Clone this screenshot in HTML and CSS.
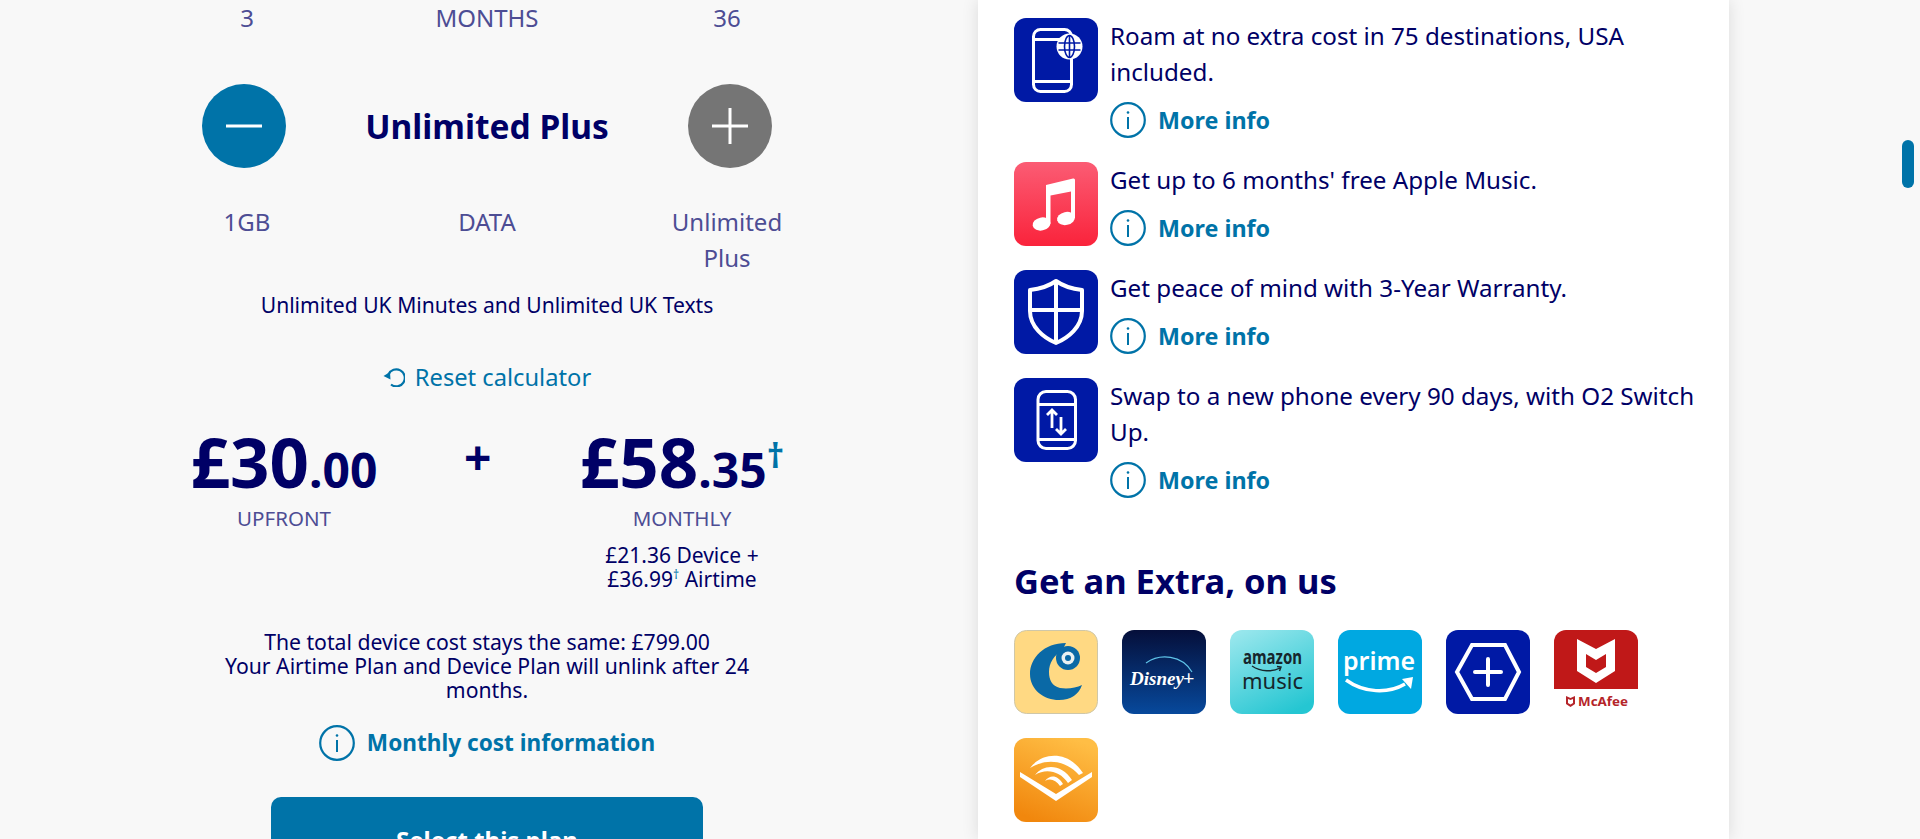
FILE: index.html
```html
<!DOCTYPE html>
<html lang="en">
<head>
    <meta charset="UTF-8">
    <meta name="viewport" content="width=device-width, initial-scale=1.0">
    <title>Unlimited Plus plan</title>
    <link rel="stylesheet" href="styles.css">
</head>
<body>
    <svg class="sprites" width="0" height="0">
        <symbol id="info" viewBox="0 0 36 36">
            <circle cx="18" cy="18" r="16.8" fill="none" stroke="currentColor" stroke-width="2.2"/>
            <path d="M18 15v12" fill="none" stroke="currentColor" stroke-width="2"/>
            <circle cx="18" cy="10.5" r="1.3" fill="currentColor"/>
        </symbol>
    </svg>

    <div class="page">
        <div class="calc">
            <div class="scale">
                <div>3</div>
                <div>MONTHS</div>
                <div>36</div>
            </div>

            <div class="stepper">
                <button class="step step-on" aria-label="Less data">
                    <svg width="36" height="4" viewBox="0 0 36 4"><path d="M0 2h36" stroke="#fff" stroke-width="3"/></svg>
                </button>
                <div class="plan-name">Unlimited Plus</div>
                <button class="step step-off" aria-label="More data">
                    <svg width="36" height="36" viewBox="0 0 36 36"><path d="M0 18h36M18 0v36" stroke="#fff" stroke-width="3"/></svg>
                </button>
            </div>

            <div class="scale scale-data">
                <div>1GB</div>
                <div>DATA</div>
                <div>Unlimited Plus</div>
            </div>

            <div class="allowance">Unlimited UK Minutes and Unlimited UK Texts</div>

            <a class="reset" href="#">
                <svg width="22" height="20" viewBox="0 0 22 20" fill="none" stroke="currentColor" stroke-width="2.2">
                    <path d="M5.500 7.500A8.500 8.500 0 1 1 8 17.500"/>
                    <path d="M0.500 9l6.500-4 0.500 7.500z" stroke="none" fill="currentColor"/>
                </svg>
                Reset calculator
            </a>

            <div class="prices">
                <div class="price price-up">
                    <div class="amount">£30<small>.00</small></div>
                    <div class="price-label">UPFRONT</div>
                </div>
                <div class="plus">+</div>
                <div class="price price-month">
                    <div class="amount">£58<small>.35</small><sup>†</sup></div>
                    <div class="price-label">MONTHLY</div>
                    <div class="split">£21.36 Device +<br>£36.99<sup>†</sup> Airtime</div>
                </div>
            </div>

            <p class="note">The total device cost stays the same: £799.00<br>Your Airtime Plan and Device Plan will unlink after 24 months.</p>

            <a class="more more-center" href="#">
                <svg class="info" width="36" height="36"><use href="#info"/></svg>
                Monthly cost information
            </a>

            <button class="select">Select this plan</button>
        </div>

        <div class="card">
            <div class="perk">
                <svg class="tile" width="84" height="84" viewBox="0 0 84 84">
                    <rect width="84" height="84" rx="12" fill="#0019a5"/>
                    <g fill="none" stroke="#fff" stroke-width="3">
                        <rect x="19.500" y="11.500" width="38" height="62" rx="7"/>
                        <path d="M19.500 21.500h30M19.500 63.500h38"/>
                    </g>
                    <circle cx="55.500" cy="28.500" r="13" fill="#fff"/>
                    <g fill="none" stroke="#0019a5" stroke-width="1.600">
                        <ellipse cx="55.500" cy="28.500" rx="5" ry="11"/>
                        <path d="M55.500 17v23M44.500 25h22M44.500 32h22"/>
                    </g>
                </svg>
                <div class="perk-body">
                    <p>Roam at no extra cost in 75 destinations, USA included.</p>
                    <a class="more" href="#"><svg class="info" width="36" height="36"><use href="#info"/></svg>More info</a>
                </div>
            </div>

            <div class="perk">
                <svg class="tile" width="84" height="84" viewBox="0 0 84 84">
                    <defs><linearGradient id="music" x1="0" y1="0" x2="0" y2="1"><stop offset="0" stop-color="#fb5c74"/><stop offset="1" stop-color="#fa233b"/></linearGradient></defs>
                    <rect width="84" height="84" rx="12" fill="url(#music)"/>
                    <g fill="#fff">
                        <path d="M32 23L59 16.500Q61 16 61 18V56H57V29.500L36.500 33.500V62H32z"/>
                        <ellipse cx="52" cy="56.500" rx="9" ry="6.500" transform="rotate(-12 52 56.500)"/>
                        <ellipse cx="27.500" cy="62" rx="9" ry="6.500" transform="rotate(-12 27.500 62)"/>
                    </g>
                </svg>
                <div class="perk-body">
                    <p>Get up to 6 months' free Apple Music.</p>
                    <a class="more" href="#"><svg class="info" width="36" height="36"><use href="#info"/></svg>More info</a>
                </div>
            </div>

            <div class="perk">
                <svg class="tile" width="84" height="84" viewBox="0 0 84 84">
                    <rect width="84" height="84" rx="12" fill="#0019a5"/>
                    <path fill="none" stroke="#fff" stroke-width="4" stroke-linejoin="round" d="M42 11c-7 5-17 8-26 9v21c0 16 14 27 26 32 12-5 26-16 26-32V20c-9-1-19-4-26-9zM42 11v62M16 40h52"/>
                </svg>
                <div class="perk-body">
                    <p>Get peace of mind with 3-Year Warranty.</p>
                    <a class="more" href="#"><svg class="info" width="36" height="36"><use href="#info"/></svg>More info</a>
                </div>
            </div>

            <div class="perk">
                <svg class="tile" width="84" height="84" viewBox="0 0 84 84">
                    <rect width="84" height="84" rx="12" fill="#0019a5"/>
                    <g fill="none" stroke="#fff" stroke-width="3">
                        <rect x="24" y="13.500" width="37.500" height="57" rx="8"/>
                        <path d="M24 26.500h37.500M24 61.500h37.500"/>
                        <path d="M38 50V32M33 37l5-5 5 5M47 39v17M42 51l5 5 5-5" stroke-width="2.800"/>
                    </g>
                </svg>
                <div class="perk-body">
                    <p>Swap to a new phone every 90 days, with O2 Switch Up.</p>
                    <a class="more" href="#"><svg class="info" width="36" height="36"><use href="#info"/></svg>More info</a>
                </div>
            </div>

            <h2>Get an Extra, on us</h2>

            <div class="extras">
                <svg class="tile" width="84" height="84" viewBox="0 0 84 84">
                    <rect x=".5" y=".5" width="83" height="83" rx="12" fill="#ffd983" stroke="#cfc7a8"/>
                    <path fill="#0a69a6" d="M52 13C30 13 16 28 16 44c0 16 14 26 29 26 12 0 20-6 23-15-6 3-14 4-22 3-8-2-11-8-11-16 0-9 5-17 13-21z"/>
                    <circle cx="54" cy="28" r="12" fill="#0a69a6"/>
                    <circle cx="54" cy="28" r="6.500" fill="#e9f1f2"/>
                    <circle cx="54" cy="28" r="3" fill="#0a69a6"/>
                </svg>

                <svg class="tile" width="84" height="84" viewBox="0 0 84 84">
                    <defs><linearGradient id="disney" x1="0" y1="0" x2="0" y2="1"><stop offset="0" stop-color="#050f3a"/><stop offset="1" stop-color="#07499c"/></linearGradient></defs>
                    <rect width="84" height="84" rx="12" fill="url(#disney)"/>
                    <path d="M24 33c14-10 36-8 46 9" fill="none" stroke="#5fc3e8" stroke-width="1.200"/>
                    <text class="t-disney" x="8" y="55">Disney</text>
                    <text class="t-disney-plus" x="61" y="55">+</text>
                </svg>

                <svg class="tile" width="84" height="84" viewBox="0 0 84 84">
                    <defs><linearGradient id="amz" x1="0.200" y1="0" x2="0.700" y2="1"><stop offset="0" stop-color="#96e6ec"/><stop offset="1" stop-color="#25c6d2"/></linearGradient></defs>
                    <rect width="84" height="84" rx="12" fill="url(#amz)"/>
                    <text class="t-amazon" x="42.500" y="34" text-anchor="middle" textLength="59" lengthAdjust="spacingAndGlyphs">amazon</text>
                    <path d="M22 36c9 6 21 6 28 2M47 36.500l4 .5-1.500 4" fill="none" stroke="#16262c" stroke-width="1.400"/>
                    <text class="t-music" x="42.500" y="59" text-anchor="middle">music</text>
                </svg>

                <svg class="tile" width="84" height="84" viewBox="0 0 84 84">
                    <rect width="84" height="84" rx="12" fill="#00a8e1"/>
                    <text class="t-prime" x="41" y="40" text-anchor="middle">prime</text>
                    <path d="M8 50c18 13 42 14 59 4" fill="none" stroke="#fff" stroke-width="3.400"/>
                    <path d="M64 49l11-2-2 12z" fill="#fff"/>
                </svg>

                <svg class="tile" width="84" height="84" viewBox="0 0 84 84">
                    <rect width="84" height="84" rx="12" fill="#0019a5"/>
                    <path d="M11 42l15-27h33l14 27-14 27H26z" fill="none" stroke="#fff" stroke-width="4"/>
                    <path d="M42 29v26M29 42h26" fill="none" stroke="#fff" stroke-width="4" stroke-linecap="round"/>
                </svg>

                <svg class="tile" width="84" height="84" viewBox="0 0 84 84">
                    <path d="M12 0h60a12 12 0 0 1 12 12v47H0V12A12 12 0 0 1 12 0z" fill="#c01818"/>
                    <path fill="#fff" fill-rule="evenodd" d="M23 9l19 10 19-10v32L42 53 23 41zM32 24v13l10 6 10-6V24l-10 6z"/>
                    <path fill="#b5252a" fill-rule="evenodd" d="M12 66l4.500 2 4.500-2v8l-4.500 3-4.500-3zM14 69v4l2.500 1.500L19 73v-4l-2.500 1z"/>
                    <text class="t-mcafee" x="24" y="76" textLength="50" lengthAdjust="spacingAndGlyphs">McAfee</text>
                </svg>

                <svg class="tile" width="84" height="84" viewBox="0 0 84 84">
                    <defs><linearGradient id="aud" x1="0.700" y1="0" x2="0.300" y2="1"><stop offset="0" stop-color="#ffbe45"/><stop offset="1" stop-color="#f1870d"/></linearGradient></defs>
                    <rect width="84" height="84" rx="12" fill="url(#aud)"/>
                    <g fill="#fff">
                        <path d="M6 34l36 22 36-22v5L42 63 6 39z"/>
                        <path d="M16 30C28 14 54 12 69 35l-4 2C52 22 32 20 16 30z"/>
                        <path d="M21 37C30 25 48 26 58 42l-4 3C46 33 32 30 21 37z"/>
                        <path d="M31 43C36 36 44 37 49 46l-3 2C42 42 36 40 31 43z"/>
                    </g>
                </svg>
            </div>
        </div>
    </div>

    <div class="thumb"></div>
</body>
</html>
```

FILE: styles.css
```css
html, body { margin: 0; padding: 0; height: 839px; overflow: hidden; }
body { font-family: "Noto Sans", Arial, sans-serif; background: #f8f8f8; color: #000066; position: relative; }
a { color: #0073a8; text-decoration: none; }
p { margin: 0; }
.sprites { position: absolute; }

.page { display: flex; align-items: flex-start; }

/* left column */
.calc { width: 570px; margin-left: 202px; display: flex; flex-direction: column; align-items: center; flex: none; }
.scale { width: 620px; display: grid; grid-template-columns: 140px 140px 140px; column-gap: 100px; justify-content: center; text-align: center; font-size: 24px; line-height: 36px; color: #4d4d94; flex: none; margin: 0 -25px; }
.scale-data { margin-top: 36px; }
.stepper { width: 100%; display: flex; justify-content: space-between; align-items: center; margin-top: 48px; }
.step { width: 84px; height: 84px; border: none; border-radius: 50%; padding: 0; display: flex; align-items: center; justify-content: center; }
.step-on { background: #0073a8; }
.step-off { background: #757575; }
.plan-name { font-size: 33.5px; font-weight: 700; line-height: 44px; }
.allowance { font-size: 21.1px; line-height: 24px; margin-top: 17px; }
.reset { display: flex; align-items: center; gap: 10px; font-size: 23.7px; line-height: 36px; margin-top: 42px; }

.prices { width: 100%; display: flex; margin-top: 28px; }
.price { display: flex; flex-direction: column; align-items: center; }
.price-up { width: 204px; margin-left: -20px; }
.price-month { width: 220px; margin-left: auto; margin-right: -20px; }
.plus { font-size: 48px; font-weight: 700; line-height: 48px; margin: 10px 0 0 78px; }
.amount { font-size: 69px; font-weight: 700; line-height: 76px; white-space: nowrap; }
.amount small { font-size: 48px; line-height: 0; }
.amount sup { font-size: 34px; line-height: 0; color: #0073a8; vertical-align: 20px; }
.price-label { font-size: 20.5px; line-height: 28px; color: #4d4d94; margin-top: 5px; }
.split { font-size: 21px; line-height: 24px; text-align: center; margin-top: 11px; }
.split sup { font-size: 12px; line-height: 0; color: #0073a8; vertical-align: 8px; }

.note { width: 560px; font-size: 21.2px; line-height: 24px; text-align: center; margin-top: 39px; }
.more { display: flex; align-items: center; gap: 12px; font-size: 22.6px; font-weight: 700; line-height: 36px; }
.more-center { margin-top: 23px; }
.select { width: 432px; height: 84px; flex: none; background: #0073a8; color: #fff; border: none; border-radius: 10px; font: 700 24px "Noto Sans", Arial, sans-serif; margin-top: 36px; }

/* right card */
.card { width: 715px; height: 821px; flex: none; margin-left: 206px; padding: 18px 0 0 36px; background: #fff; box-shadow: 0 0 16px rgba(0,0,0,0.12); }
.perk { display: flex; gap: 12px; margin-bottom: 24px; }
.tile { flex: none; display: block; }
.perk-body { width: 590px; font-size: 24.2px; line-height: 36px; }
.perk .more { margin-top: 12px; font-size: 23.3px; }
.card h2 { font-size: 34.5px; line-height: 44px; margin: 61px 0 0; }
.extras { display: flex; flex-wrap: wrap; gap: 24px; width: 640px; margin-top: 27px; }

.t-disney { font: italic 700 19px "Liberation Serif", serif; fill: #fff; }
.t-disney-plus { font: 400 20px "Noto Sans", sans-serif; fill: #fff; }
.t-amazon { font: 700 19px "Noto Sans", sans-serif; fill: #16262c; }
.t-music { font: 400 22px "Noto Sans", sans-serif; fill: #16262c; }
.t-prime { font: 600 25px "Noto Sans", sans-serif; fill: #fff; }
.t-mcafee { font: 700 12px "Noto Sans", sans-serif; fill: #b5252a; }

.thumb { position: absolute; left: 1902px; top: 140px; width: 12px; height: 48px; border-radius: 6px; background: #0073a8; }
```
